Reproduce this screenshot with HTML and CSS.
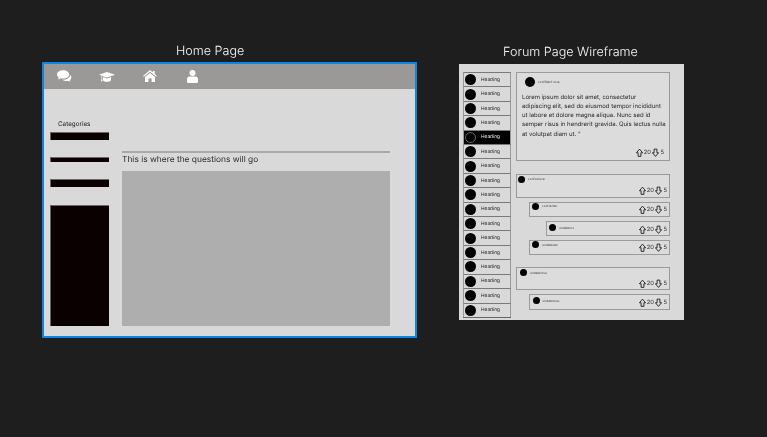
FILE: index.html
```html
<!DOCTYPE html>
<html lang="en">
<head>
<meta charset="utf-8">
<title>Wireframes</title>
<link rel="stylesheet" href="styles.css">
</head>
<body>
<svg class="sprites" width="0" height="0" aria-hidden="true">
  <symbol id="up" viewBox="0 0 10 12"><path d="M5 .8 9.400 6H7v5.200H3V6H.6z" fill="none" stroke="currentColor" stroke-width="1.200" stroke-linejoin="round"/></symbol>
  <symbol id="down" viewBox="0 0 10 12"><path d="M5 11.200 9.400 6H7V.8H3V6H.6z" fill="none" stroke="currentColor" stroke-width="1.200" stroke-linejoin="round"/></symbol>
</svg>
<main class="canvas">
  <section class="board board-home">
    <h2 class="title title-home">Home Page</h2>
    <div class="home">
      <nav class="nav">
        <svg class="ico ico-chat" viewBox="0 0 16 13"><path d="M6.5 0C2.9 0 0 2 0 4.5c0 1.3.8 2.5 2 3.3-.2.8-.7 1.5-1.2 2 1.2-.1 2.5-.6 3.3-1.2.7.2 1.5.3 2.4.3 3.6 0 6.500-2 6.500-4.400S10.100 0 6.500 0z"/><path d="M14.200 4.600c.1 3-3 5.400-6.900 5.500-.6 0-1.200 0-1.700-.1 1 1 2.700 1.600 4.400 1.600.6 0 1.200-.1 1.700-.2.700.5 1.800 1 2.900 1-.5-.5-.9-1.100-1-1.700 1.100-.7 1.700-1.700 1.700-2.800 0-1.300-.8-2.500-1.100-3.300z"/></svg>
        <svg class="ico ico-cap" viewBox="0 0 16 10"><path d="M8 0 0 2.700l2.700 1v1.100c-.3.200-.4.400-.4.700 0 .2.100.4.300.6L2 9.300h1.600L3 6.100c.2-.2.300-.4.300-.6 0-.3-.1-.5-.3-.6V3.900L8 5.500l8-2.800z"/><path d="M4 5.100V8c0 1 1.800 1.800 4 1.800s4-.8 4-1.800V5.100L8 6.500z"/></svg>
        <svg class="ico ico-home" viewBox="0 0 14 12"><path d="M7 0 0 5.900l.8.900L7 1.700l6.200 5.100.8-.9-2.300-1.900V1h-1.800v1.500z"/><path d="M7 2.900 2 7v5h3.400V8.500h3.200V12H12V7z"/></svg>
        <svg class="ico ico-user" viewBox="0 0 11 13"><circle cx="5.500" cy="3" r="3"/><path d="M2.600 6.600h5.800c1.500 0 2.600 1.200 2.600 2.700v2.500c0 .7-.5 1.200-1.200 1.200H1.200C.5 13 0 12.500 0 11.800V9.300c0-1.500 1.100-2.700 2.600-2.700z"/></svg>
      </nav>
      <div class="home-body">
        <aside class="cats">
          <p class="cats-label">Categories</p>
          <div class="bar bar-a"></div>
          <div class="bar bar-b"></div>
          <div class="bar bar-c"></div>
          <div class="bar bar-d"></div>
        </aside>
        <div class="questions">
          <p class="q-text">This is where the questions will go</p>
          <div class="q-box"></div>
        </div>
      </div>
    </div>
  </section>

  <section class="board board-forum">
    <h2 class="title title-forum">Forum Page Wireframe</h2>
    <div class="forum">
      <ul class="side">
        <li class="side-row"><i class="dot"></i>Heading</li>
        <li class="side-row"><i class="dot"></i>Heading</li>
        <li class="side-row"><i class="dot"></i>Heading</li>
        <li class="side-row"><i class="dot"></i>Heading</li>
        <li class="side-row active"><i class="dot"></i>Heading</li>
        <li class="side-row"><i class="dot"></i>Heading</li>
        <li class="side-row"><i class="dot"></i>Heading</li>
        <li class="side-row"><i class="dot"></i>Heading</li>
        <li class="side-row"><i class="dot"></i>Heading</li>
        <li class="side-row"><i class="dot"></i>Heading</li>
        <li class="side-row"><i class="dot"></i>Heading</li>
        <li class="side-row"><i class="dot"></i>Heading</li>
        <li class="side-row"><i class="dot"></i>Heading</li>
        <li class="side-row"><i class="dot"></i>Heading</li>
        <li class="side-row"><i class="dot"></i>Heading</li>
        <li class="side-row"><i class="dot"></i>Heading</li>
        <li class="side-row"><i class="dot"></i>Heading</li>
      </ul>
      <div class="thread">
        <article class="card card-main">
          <div class="who"><i class="dot dot-main"></i><span class="name">confidant rose</span></div>
          <p class="lorem">Lorem ipsum dolor sit amet, consectetur adipiscing elit, sed do eiusmod tempor incididunt ut labore et dolore magna aliqua. Nunc sed id semper risus in hendrerit gravida. Quis lectus nulla at volutpat diam ut. "</p>
          <div class="votes votes-main"><svg class="arrow"><use href="#up"/></svg><span>20</span><svg class="arrow"><use href="#down"/></svg><span>5</span></div>
        </article>
        <article class="card reply r1">
          <div class="who"><i class="dot dot-s"></i><span class="name">confusiosa</span></div>
          <div class="votes"><svg class="arrow"><use href="#up"/></svg><span>20</span><svg class="arrow"><use href="#down"/></svg><span>5</span></div>
        </article>
        <article class="card reply r2">
          <div class="who"><i class="dot dot-s"></i><span class="name">contrarian</span></div>
          <div class="votes"><svg class="arrow"><use href="#up"/></svg><span>20</span><svg class="arrow"><use href="#down"/></svg><span>5</span></div>
        </article>
        <article class="card reply r3">
          <div class="who"><i class="dot dot-s"></i><span class="name">undateros</span></div>
          <div class="votes"><svg class="arrow"><use href="#up"/></svg><span>20</span><svg class="arrow"><use href="#down"/></svg><span>5</span></div>
        </article>
        <article class="card reply r4">
          <div class="who"><i class="dot dot-s"></i><span class="name">undateoan</span></div>
          <div class="votes"><svg class="arrow"><use href="#up"/></svg><span>20</span><svg class="arrow"><use href="#down"/></svg><span>5</span></div>
        </article>
        <article class="card reply r5">
          <div class="who"><i class="dot dot-s"></i><span class="name">undaterous</span></div>
          <div class="votes"><svg class="arrow"><use href="#up"/></svg><span>20</span><svg class="arrow"><use href="#down"/></svg><span>5</span></div>
        </article>
        <article class="card reply r6">
          <div class="who"><i class="dot dot-s"></i><span class="name">undaterous</span></div>
          <div class="votes"><svg class="arrow"><use href="#up"/></svg><span>20</span><svg class="arrow"><use href="#down"/></svg><span>5</span></div>
        </article>
      </div>
    </div>
  </section>
</main>
</body>
</html>
```
FILE: styles.css
```css
* { box-sizing: border-box; margin: 0; padding: 0; }
html, body { height: 100%; background: #1e1e1e; overflow: hidden; }
body { font-family: Inter, "Liberation Sans", sans-serif; text-rendering: geometricPrecision; }
.sprites { display: block; height: 0; }

.canvas { display: flex; align-items: flex-start; padding-left: 42px; will-change: transform; }
.board { display: flex; flex-direction: column; }
.board-home { width: 375px; }
.board-forum { width: 225px; margin-left: 41.5px; }

.title { font-weight: 300; font-size: 12.600px; line-height: 16px; color: #f8f8f8; white-space: nowrap; }
.title-home { padding: 44px 0 2px 134px; }
.title-forum { padding: 44.500px 0 3.500px 44.500px; }

/* Home frame */
.home { height: 276px; border: 2px solid #0c84e4; background: #d9d9d9; display: flex; flex-direction: column; }
.nav { height: 25px; background: #9b9898; display: flex; align-items: flex-start; flex: none; }
.ico { display: block; fill: #fff; flex: none; }
.ico-chat { width: 15px; height: 12.500px; margin: 6px 0 0 13px; }
.ico-cap { width: 16px; height: 10px; margin: 8px 0 0 27px; }
.ico-home { width: 14px; height: 12px; margin: 6px 0 0 28px; }
.ico-user { width: 11px; height: 13px; margin: 6px 0 0 30px; }

.home-body { display: flex; padding-left: 6px; }
.cats { width: 59px; }
.cats-label { font-size: 6.300px; line-height: 8px; color: #222; padding: 31px 0 0 8px; height: 43px; }
.bar { background: #0a0000; border-top: 1px solid #6d6666; border-left: 1px solid #6d6666; }
.bar-a { height: 8px; }
.bar-b { height: 5px; margin-top: 17px; }
.bar-c { height: 8px; margin-top: 17px; }
.bar-d { height: 121px; margin-top: 18px; }

.questions { width: 268px; margin: 62px 0 0 13px; }
.q-text { border-top: 2px solid #a9a9a9; font-size: 8.400px; line-height: 13px; padding-top: 1px; height: 20px; color: #2b2b2b; white-space: nowrap; }
.q-box { height: 155px; background: #aeaeae; }

/* Forum frame */
.forum { height: 256px; background: #d9d9d9; display: flex; padding: 8px 13.500px 0 4.500px; }
.side { list-style: none; width: 48px; flex: none; border-bottom: 1px solid #666; height: 246px; }
.side-row { height: 14.410px; display: flex; align-items: center; border-top: 1px solid #7a7a7a; border-left: 1px solid #9a9a9a; border-right: 1px solid #9a9a9a; font-size: 4.800px; color: #222; padding-left: 1px; }
.dot { display: block; flex: none; border-radius: 50%; background: #000; }
.side-row .dot { width: 11px; height: 11px; margin-right: 5px; }
.active { background: #000; color: #eee; }
.active .dot { background: #000; border: 1px solid #666; }

.thread { width: 154px; margin-left: 5px; }
.card { border: 1px solid #9a9a9a; display: flex; background: #dcdcdc; }
.card-main { flex-direction: column; height: 89px; padding: 4px 3px 0 5px; }
.who { display: flex; align-items: center; }
.card-main .who { padding-left: 3px; }
.dot-main { width: 10px; height: 10px; margin-right: 3px; }
.dot-s { width: 7px; height: 7px; margin-right: 3px; }
.name { font-size: 3.200px; color: #444; white-space: nowrap; }
.lorem { font-size: 6px; line-height: 9.300px; color: #2a2a2a; margin-top: 5.500px; }

.votes { display: flex; align-items: center; justify-content: flex-end; font-size: 5.800px; color: #333; }
.votes span { margin: 0 1.500px 0 1px; }
.votes .arrow { width: 7px; height: 9.500px; color: #111; display: block; flex: none; }
.votes-main { margin-top: auto; padding: 0 .5px 3px 0; }

.reply { justify-content: space-between; align-items: flex-start; padding: 0 .5px 1px 1px; }
.reply .votes { align-self: flex-end; }
.r1 { margin-top: 13px; height: 23.500px; }
.r2 { margin: 4px 0 0 13px; height: 15px; }
.r3 { margin: 4.500px 0 0 30px; height: 15px; }
.r4 { margin: 4px 0 0 13px; height: 14.500px; }
.r5 { margin-top: 12.500px; height: 23px; }
.r6 { margin: 4px 0 0 13px; height: 15.500px; }
.reply .who { height: 7px; margin-top: .5px; flex: none; }
.r2 .who, .r4 .who { padding-left: 1px; margin-top: 0; }
.r3 .who { padding-left: 1px; margin-top: 2px; }
.r5 .who { padding-left: 2px; margin-top: 1px; }
.r6 .who { padding-left: 1.500px; margin-top: 2px; }
```
